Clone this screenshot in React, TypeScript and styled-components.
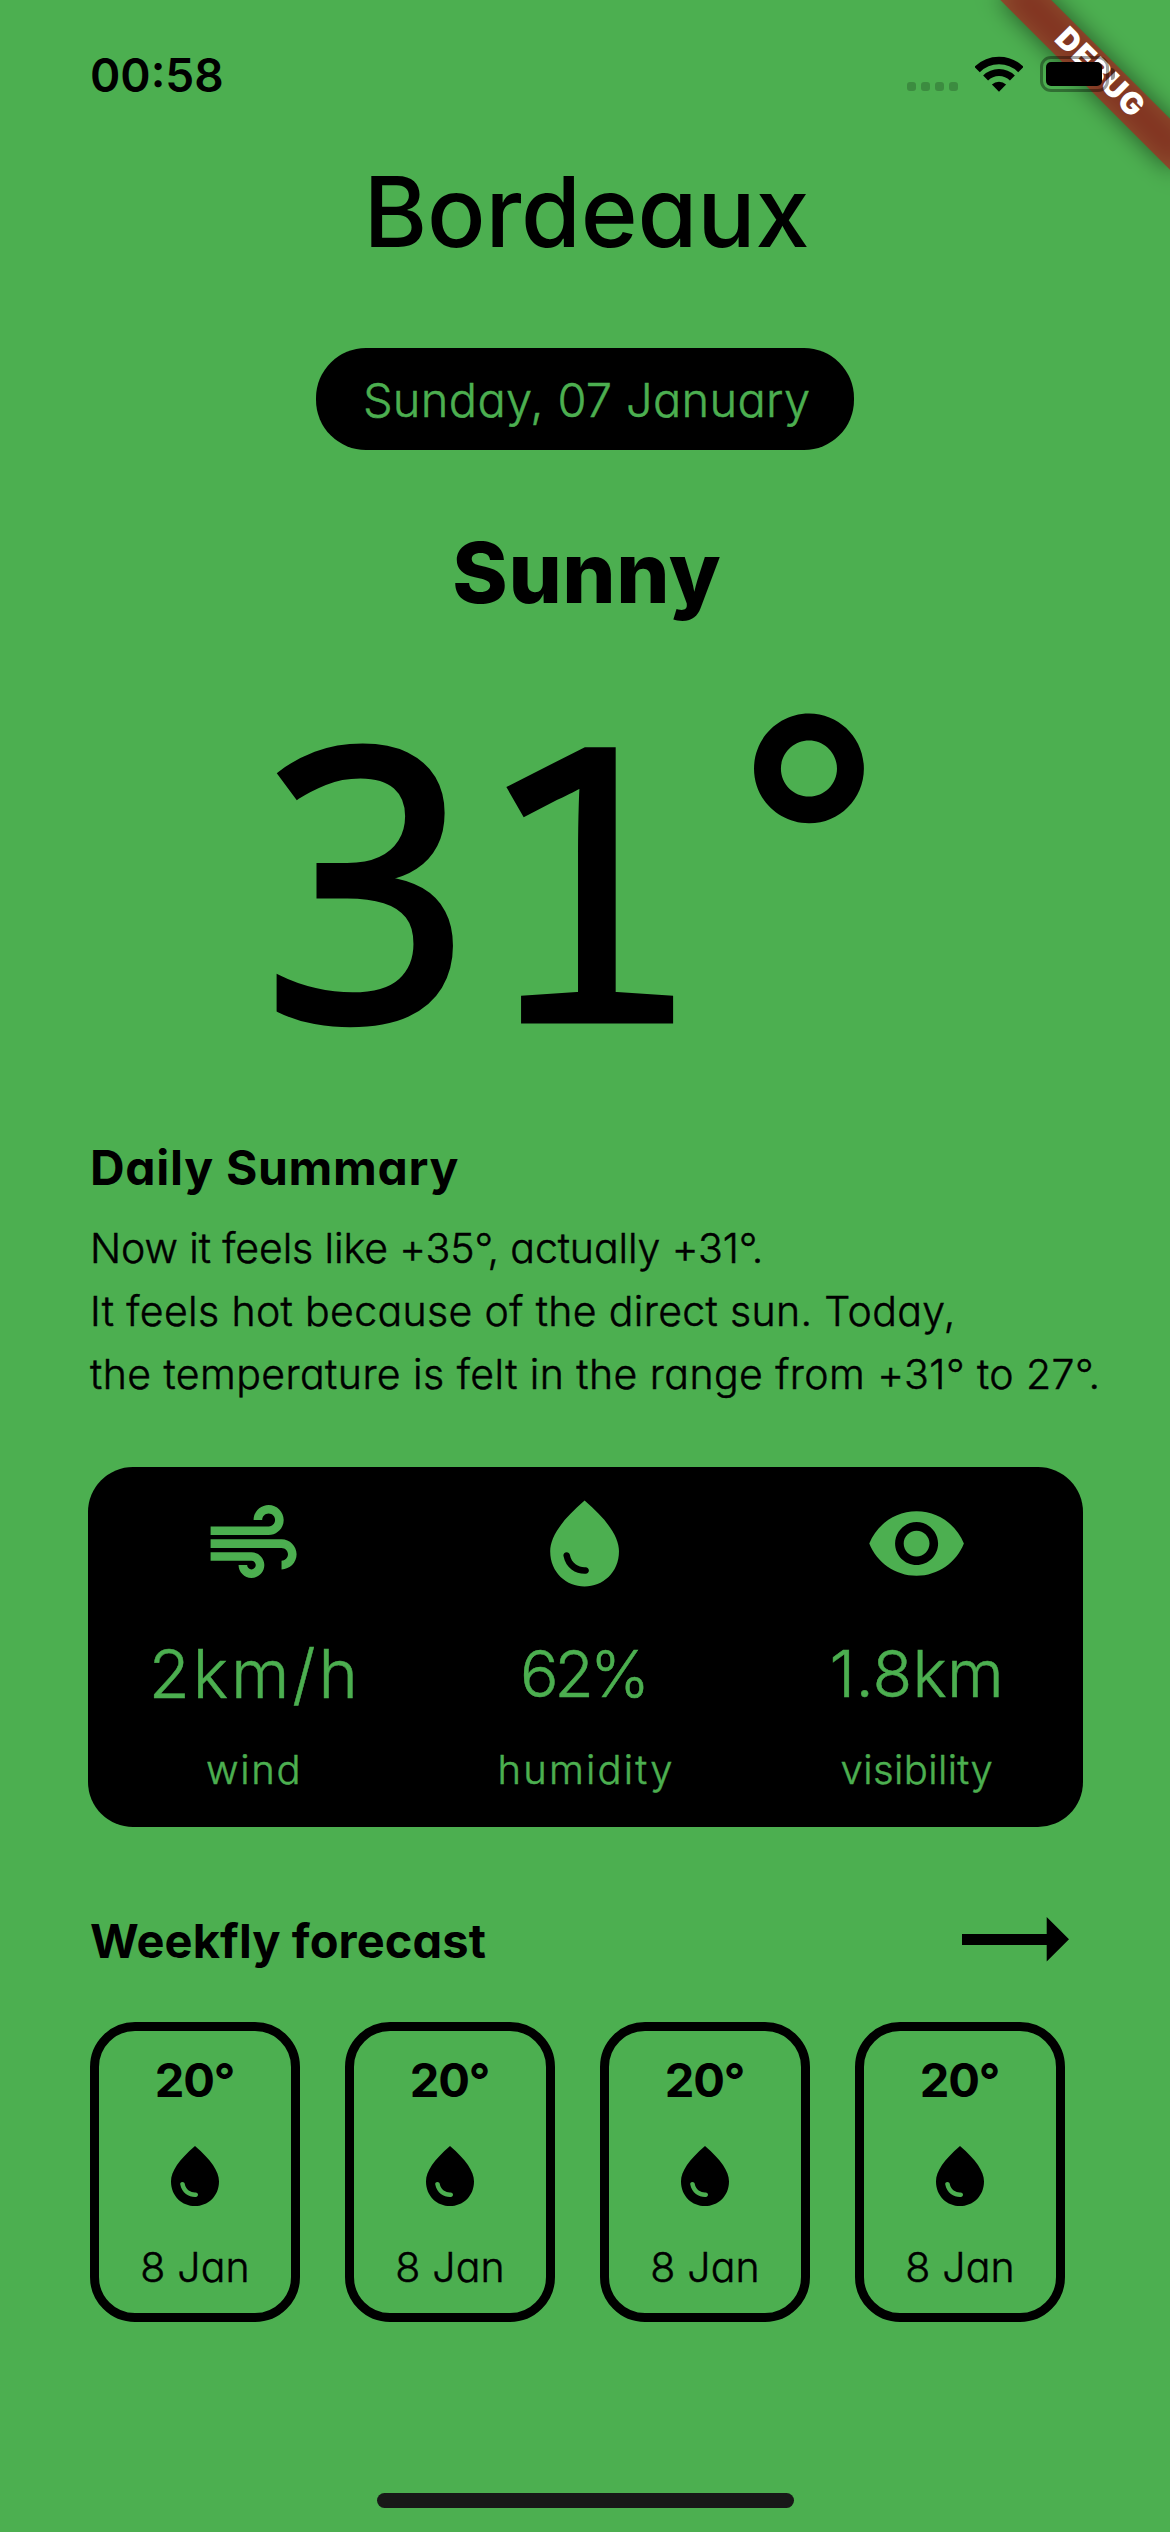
import React from "react";
import styled, { createGlobalStyle } from "styled-components";

const GREEN = "#4caf50";

const GlobalStyle = createGlobalStyle`
  * { box-sizing: border-box; }
  body { margin: 0; background: ${GREEN}; }
`;

const Screen = styled.main`
  position: relative;
  width: 1170px;
  height: 2532px;
  overflow: hidden;
  display: flex;
  flex-direction: column;
  align-items: center;
  background: ${GREEN};
  color: #000;
  font-family: Inter, "Open Sans", sans-serif;
  font-feature-settings: "cv11";
`;

const Text = styled.span<{ $size: number; $weight: number; $line: number; $spacing?: number }>`
  display: block;
  margin: 0 ${(p) => -(p.$spacing ?? 0)}px 0 0;
  white-space: nowrap;
  font-size: ${(p) => p.$size}px;
  font-weight: ${(p) => p.$weight};
  line-height: ${(p) => p.$line}px;
  letter-spacing: ${(p) => p.$spacing ?? 0}px;
  -webkit-text-stroke: ${(p) => (p.$weight === 300 ? "0.5px currentColor" : "0")};
`;

/* ---------- debug ribbon ---------- */

const RibbonCorner = styled.div`
  position: absolute;
  top: 0;
  right: 0;
  width: 260px;
  height: 260px;
  overflow: hidden;
`;

const RibbonShadow = styled.div`
  position: absolute;
  left: 140px;
  top: 84px;
  width: 240px;
  height: 36px;
  transform-origin: 120px -84px;
  transform: rotate(45deg);
  background: rgba(0, 0, 0, 0.5);
  filter: blur(12px);
`;

const Ribbon = styled.div`
  position: absolute;
  left: 140px;
  top: 84px;
  width: 240px;
  height: 36px;
  padding: 0 0 4px 3px;
  display: flex;
  align-items: center;
  justify-content: center;
  transform-origin: 120px -84px;
  transform: rotate(45deg);
  background: rgba(183, 28, 28, 0.627);
  color: #fff;
`;

/* ---------- status bar ---------- */

const StatusBar = styled.header`
  position: relative;
  width: 100%;
  height: 150px;
  padding: 45px 55px 0 90px;
  display: flex;
  justify-content: space-between;
  align-items: flex-start;
`;

const StatusIcons = styled.div`
  display: flex;
  align-items: center;
  height: 58px;
`;

const SignalDots = styled.div`
  display: flex;
  gap: 5px;
  margin: 25px 17px 0 0;
`;

const Dot = styled.i`
  width: 9px;
  height: 9px;
  border-radius: 3px;
  background: rgba(0, 0, 0, 0.2);
`;

const Battery = styled.div`
  display: flex;
  align-items: center;
  margin-left: 17px;
`;

const BatteryShell = styled.div`
  width: 69px;
  height: 36px;
  padding: 3px;
  border: 3px solid rgba(0, 0, 0, 0.36);
  border-radius: 11px;
`;

const BatteryLevel = styled.div`
  width: 56px;
  height: 24px;
  border-radius: 5px;
  background: #000;
`;

const BatteryTip = styled.i`
  width: 4px;
  height: 12px;
  margin-left: 2px;
  border-radius: 0 4px 4px 0;
  background: rgba(0, 0, 0, 0.4);
`;

/* ---------- current weather ---------- */

const Centered = styled.div`
  padding-left: 3px;
`;

const DatePill = styled.div`
  width: 538px;
  height: 102px;
  margin: 74px 0 71px;
  padding: 2px 0 0 3px;
  display: flex;
  align-items: center;
  justify-content: center;
  border-radius: 50px;
  background: #000;
  color: ${GREEN};
`;

const Temperature = styled.div`
  width: 100%;
  height: 341px;
  margin-top: 58px;
  padding-left: 251px;
  display: flex;
  align-items: flex-start;
`;

const Degrees = styled.span`
  margin-top: 41px;
  font-family: "Noto Sans Mono", "DejaVu Sans Mono", monospace;
  font-size: 380px;
  line-height: 300px;
  letter-spacing: -6px;
  -webkit-text-stroke: 5px #000;
`;

const DegreeSign = styled.span`
  margin-top: 2px;
  margin-left: 39px;
  font-size: 328px;
  font-weight: 500;
  line-height: 300px;
`;

const Summary = styled.section`
  width: 100%;
  margin-top: 114px;
  padding-left: 90px;
  display: flex;
  flex-direction: column;
  gap: 19px;
`;

/* ---------- metrics ---------- */

const Metrics = styled.section`
  width: 995px;
  height: 360px;
  margin-top: 61px;
  display: grid;
  grid-template-columns: repeat(3, 1fr);
  border-radius: 45px;
  background: #000;
  color: ${GREEN};
`;

const Metric = styled.div`
  padding-top: 25px;
  display: flex;
  flex-direction: column;
  align-items: center;
`;

const Icon = styled.svg<{ $size: number }>`
  display: block;
  flex: none;
  width: ${(p) => p.$size}px;
  height: ${(p) => p.$size}px;
  fill: currentColor;
`;

const MetricValue = styled.div`
  margin: 39px 0 30px;
`;

/* ---------- forecast ---------- */

const ForecastHeader = styled.div`
  width: 100%;
  height: 60px;
  margin: 84px 0 51px;
  padding: 0 101px 0 90px;
  display: flex;
  justify-content: space-between;
  align-items: center;
`;

const Arrow = styled.svg`
  display: block;
  width: 107px;
  height: 45px;
  margin-bottom: 3px;
`;

const ForecastRow = styled.section`
  width: 100%;
  padding-left: 90px;
  display: flex;
  gap: 45px;
`;

const DayCard = styled.article`
  width: 210px;
  height: 300px;
  padding-top: 19px;
  display: flex;
  flex-direction: column;
  align-items: center;
  gap: 30px;
  border: 9px solid #000;
  border-radius: 45px;
`;

const HomeIndicator = styled.div`
  width: 417px;
  height: 15px;
  margin: auto 0 24px;
  border-radius: 8px;
  background: #181818;
`;

const AIR =
  "M14.5 17c0 1.65-1.35 3-3 3s-3-1.35-3-3h2c0 .55.45 1 1 1s1-.45 1-1-.45-1-1-1H2v-2h9.5c1.65 0 3 1.35 3 3zM19 6.5C19 4.57 17.43 3 15.5 3S12 4.57 12 6.5h2c0-.83.67-1.5 1.5-1.5s1.5.67 1.5 1.5S16.33 8 15.5 8H2v2h13.5c1.93 0 3.5-1.57 3.5-3.5zm-.5 4.5H2v2h16.5c.83 0 1.5.67 1.5 1.5s-.67 1.5-1.5 1.5v2c1.93 0 3.5-1.57 3.5-3.5S20.43 11 18.5 11z";
const DROP =
  "M12 2c-5.33 4.55-8 8.48-8 11.8 0 4.98 3.8 8.2 8 8.2s8-3.22 8-8.2c0-3.32-2.67-7.25-8-11.8zM7.83 14c.37 0 .67.26.74.62.41 2.22 2.28 2.98 3.64 2.87.43-.02.79.32.79.75 0 .4-.32.73-.72.75-2.13.13-4.62-1.09-5.19-4.12a.75.75 0 0 1 .74-.87z";
const EYE =
  "M12 4.5C7 4.5 2.73 7.61 1 12c1.73 4.39 6 7.5 11 7.5s9.27-3.11 11-7.5c-1.73-4.39-6-7.5-11-7.5zM12 17c-2.76 0-5-2.24-5-5s2.24-5 5-5 5 2.24 5 5-2.24 5-5 5zm0-8c-1.66 0-3 1.34-3 3s1.34 3 3 3 3-1.34 3-3-1.34-3-3-3z";

const metrics = [
  { icon: AIR, value: "2km/h", size: 67, tracking: 2.9, label: "wind", labelTracking: 1.7 },
  { icon: DROP, value: "62%", size: 64, tracking: -4, label: "humidity", labelTracking: 2.2 },
  { icon: EYE, value: "1.8km", size: 65, tracking: 0.2, label: "visibility", labelTracking: 0.4 },
];

const summary = [
  { text: "Now it feels like +35°, actually +31°.", tracking: -0.1 },
  { text: "It feels hot because of the direct sun. Today,", tracking: 0.36 },
  { text: "the temperature is felt in the range from +31° to 27°.", tracking: 0.44 },
];

const days = [
  { temp: "20°", date: "8 Jan" },
  { temp: "20°", date: "8 Jan" },
  { temp: "20°", date: "8 Jan" },
  { temp: "20°", date: "8 Jan" },
];

export default function App() {
  return (
    <Screen>
      <GlobalStyle />
      <RibbonCorner>
        <RibbonShadow />
        <Ribbon>
          <Text $size={30.6} $weight={900} $line={32} $spacing={1.1}>DEBUG</Text>
        </Ribbon>
      </RibbonCorner>

      <StatusBar>
        <Text $size={46} $weight={600} $line={60}>00:58</Text>
        <StatusIcons>
          <SignalDots>
            <Dot />
            <Dot />
            <Dot />
            <Dot />
          </SignalDots>
          <svg width="48" height="36" viewBox="0 0 48 36">
            <path d="M2.1 13.6A31 31 0 0 1 45.9 13.6" fill="none" stroke="#000" strokeWidth="7.6" />
            <path d="M10.6 22.1A19 19 0 0 1 37.4 22.1" fill="none" stroke="#000" strokeWidth="7" />
            <path d="M24 35.7L16.9 28.6A10.2 10.2 0 0 1 31.1 28.6Z" />
          </svg>
          <Battery>
            <BatteryShell>
              <BatteryLevel />
            </BatteryShell>
            <BatteryTip />
          </Battery>
        </StatusIcons>
      </StatusBar>

      <Centered>
        <Text as="h1" $size={97} $weight={500} $line={124} $spacing={-0.2}>Bordeaux</Text>
      </Centered>
      <DatePill>
        <Text $size={47} $weight={300} $line={60} $spacing={0.3}>Sunday, 07 January</Text>
      </DatePill>
      <Centered>
        <Text $size={84} $weight={800} $line={104} $spacing={0.6}>Sunny</Text>
      </Centered>

      <Temperature>
        <Degrees>31</Degrees>
        <DegreeSign>°</DegreeSign>
      </Temperature>

      <Summary>
        <Text as="h2" $size={48} $weight={700} $line={60} $spacing={0.7}>Daily Summary</Text>
        <div>
          {summary.map((line) => (
            <Text key={line.text} $size={41} $weight={300} $line={63} $spacing={line.tracking}>
              {line.text}
            </Text>
          ))}
        </div>
      </Summary>

      <Metrics>
        {metrics.map((m) => (
          <Metric key={m.label}>
            <Icon $size={103.2} viewBox="0 0 24 24">
              <path d={m.icon} />
            </Icon>
            <MetricValue>
              <Text $size={m.size} $weight={300} $line={80} $spacing={m.tracking}>{m.value}</Text>
            </MetricValue>
            <Text $size={40} $weight={300} $line={51} $spacing={m.labelTracking}>{m.label}</Text>
          </Metric>
        ))}
      </Metrics>

      <ForecastHeader>
        <Text as="h2" $size={47} $weight={700} $line={60} $spacing={0.1}>Weekfly forecast</Text>
        <Arrow viewBox="0 0 107 45">
          <path d="M0 17H84.7V0L107 22.3L84.7 44.6V28H0Z" />
        </Arrow>
      </ForecastHeader>
      <ForecastRow>
        {days.map((d, i) => (
          <DayCard key={i}>
            <Text $size={47} $weight={700} $line={60} $spacing={-1.2}>{d.temp}</Text>
            <Icon $size={72} viewBox="0 0 24 24">
              <path d={DROP} />
            </Icon>
            <Text $size={41} $weight={300} $line={50} $spacing={0.2}>{d.date}</Text>
          </DayCard>
        ))}
      </ForecastRow>
      <HomeIndicator />
    </Screen>
  );
}
